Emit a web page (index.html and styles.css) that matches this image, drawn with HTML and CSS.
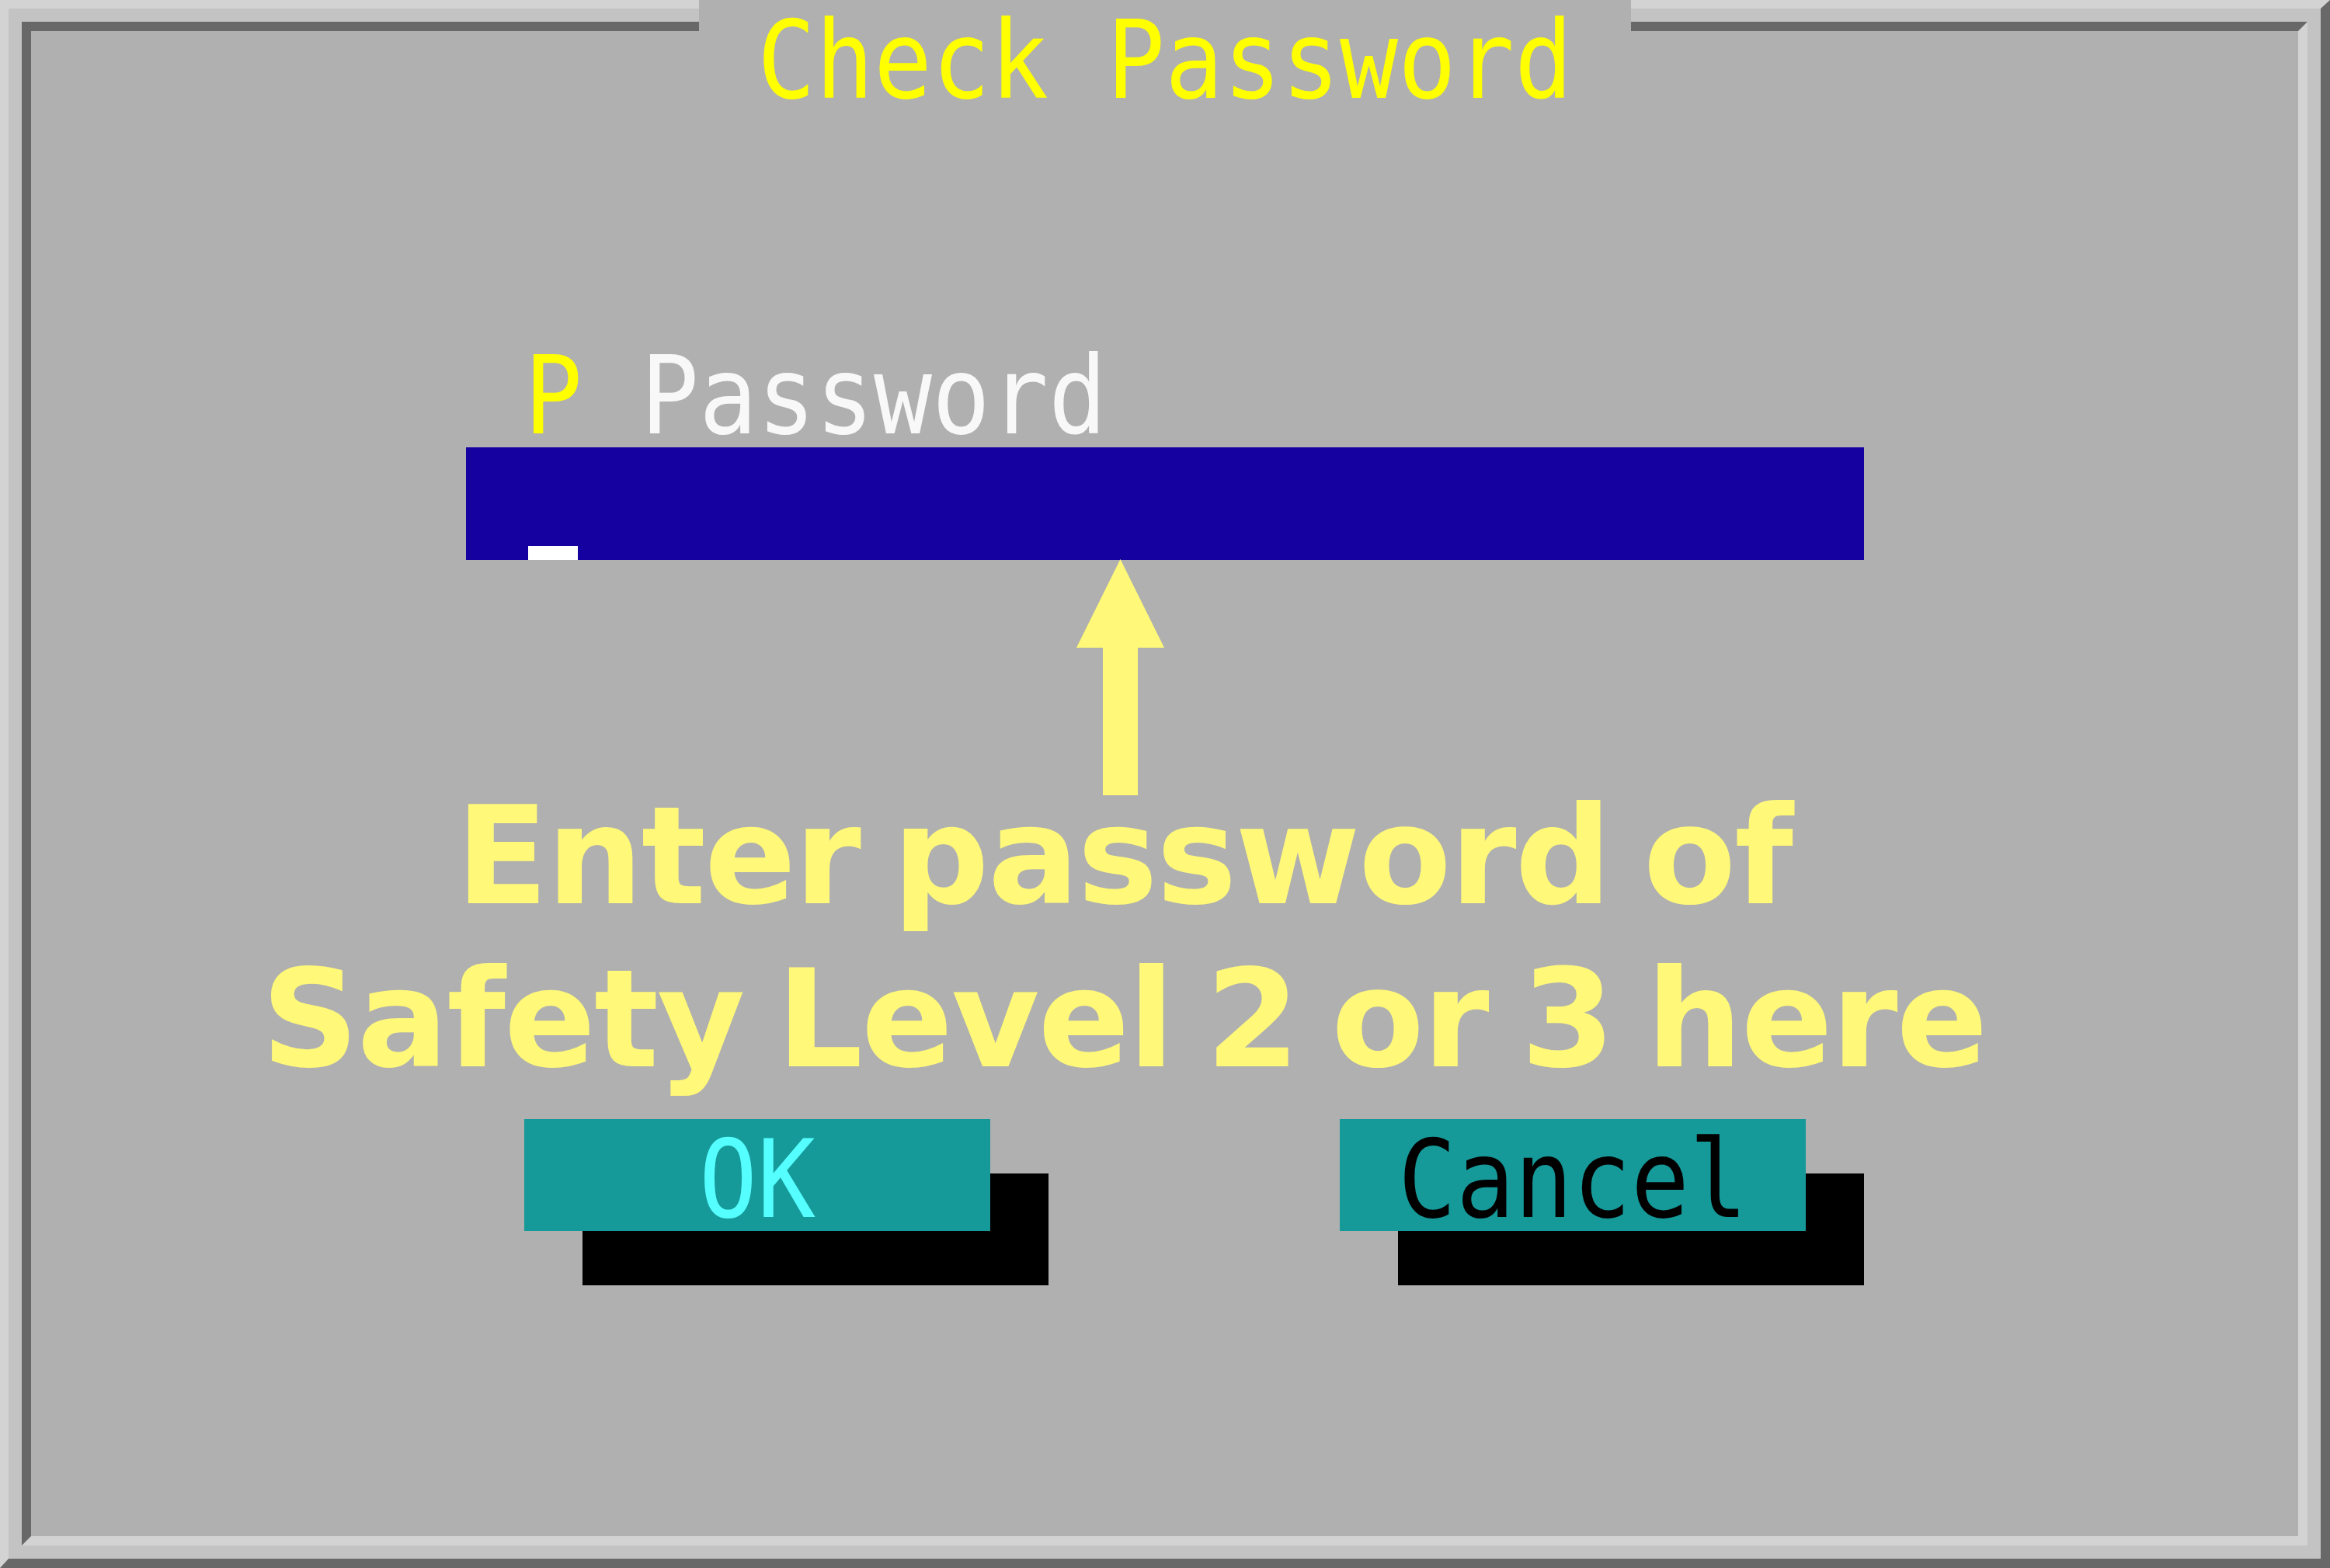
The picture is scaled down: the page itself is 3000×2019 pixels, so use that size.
FILE: index.html
```html
<!DOCTYPE html>
<html lang="en">
<head>
<meta charset="utf-8">
<title>Check Password</title>
<link rel="stylesheet" href="styles.css">
</head>
<body>
<div class="frame">
  <div class="title"><span class="mono title-text"> Check Password </span></div>
  <div class="panel">
    <div class="label-row"><span class="mono label-text"><span class="hot">P</span> Password</span></div>
    <div class="field"><span class="cursor"></span></div>
    <div class="buttons">
      <div class="btn btn-ok"><span class="mono">OK</span></div>
      <div class="btn btn-cancel"><span class="mono">Cancel</span></div>
    </div>
    <div class="note">
      <svg class="arrow" width="113" height="304" viewBox="0 0 113 304" aria-hidden="true">
        <polygon points="56.5,0 113,114 79,114 79,304 34,304 34,114 0,114" fill="#fff878"/>
      </svg>
      <p class="note-text">Enter password of<br>Safety Level 2 or 3 here</p>
    </div>
  </div>
</div>
</body>
</html>
```

FILE: styles.css
```css
html, body {
  margin: 0;
  padding: 0;
  background: #b0b0b0;
}

.frame {
  position: relative;
  box-sizing: border-box;
  width: 3000px;
  height: 2019px;
  border-style: solid;
  border-width: 11px 12px 12px 11px;
  border-color: #d3d3d3 #686868 #686868 #d3d3d3;
  padding: 17px;
  background: #c3c3c3;
}

.panel {
  position: relative;
  box-sizing: border-box;
  height: 100%;
  border-style: solid;
  border-width: 12px;
  border-color: #686868 #d3d3d3 #d3d3d3 #686868;
  background: #b0b0b0;
  display: flex;
  flex-direction: column;
}

.mono {
  display: inline-block;
  font-family: "DejaVu Sans Mono", monospace;
  font-size: 124.57px;
  line-height: 144px;
  height: 144px;
  white-space: pre;
  transform: scaleY(1.12);
  transform-origin: 0 20px;
}

.title {
  position: absolute;
  z-index: 2;
  top: -11px;
  left: 889px;
  width: 1200px;
  height: 144px;
  background: #b0b0b0;
}

.title-text {
  color: #ffff00;
}

.label-row {
  margin-top: 392px;
  height: 144px;
  padding-left: 635px;
}

.label-text {
  color: #f8f8f8;
}

.hot {
  color: #ffff00;
}

.field {
  box-sizing: border-box;
  margin-left: 560px;
  width: 1800px;
  height: 145px;
  background: #1500a0;
  display: flex;
  align-items: flex-end;
  padding-left: 80px;
}

.cursor {
  display: block;
  width: 64px;
  height: 18px;
  background: #ffffff;
}

.buttons {
  margin-top: 720px;
  padding-left: 635px;
  display: flex;
  gap: 450px;
}

.btn {
  width: 600px;
  height: 144px;
  background: #169999;
  box-shadow: 75px 70px 0 #000000;
  text-align: center;
}

.btn-ok {
  color: #55ffff;
}

.btn-cancel {
  color: #000000;
}

.btn .mono {
  transform-origin: 50% 20px;
}

.note {
  position: absolute;
  top: 680px;
  left: 0;
  width: 2814px;
  display: flex;
  flex-direction: column;
  align-items: center;
}

.arrow {
  display: block;
  margin-right: 9px;
}

.note-text {
  margin: -26px 0 0;
  font-family: "DejaVu Sans", sans-serif;
  font-weight: bold;
  font-size: 174px;
  line-height: 210px;
  letter-spacing: -2px;
  word-spacing: -16px;
  color: #fff878;
  text-align: center;
  white-space: nowrap;
}
```
